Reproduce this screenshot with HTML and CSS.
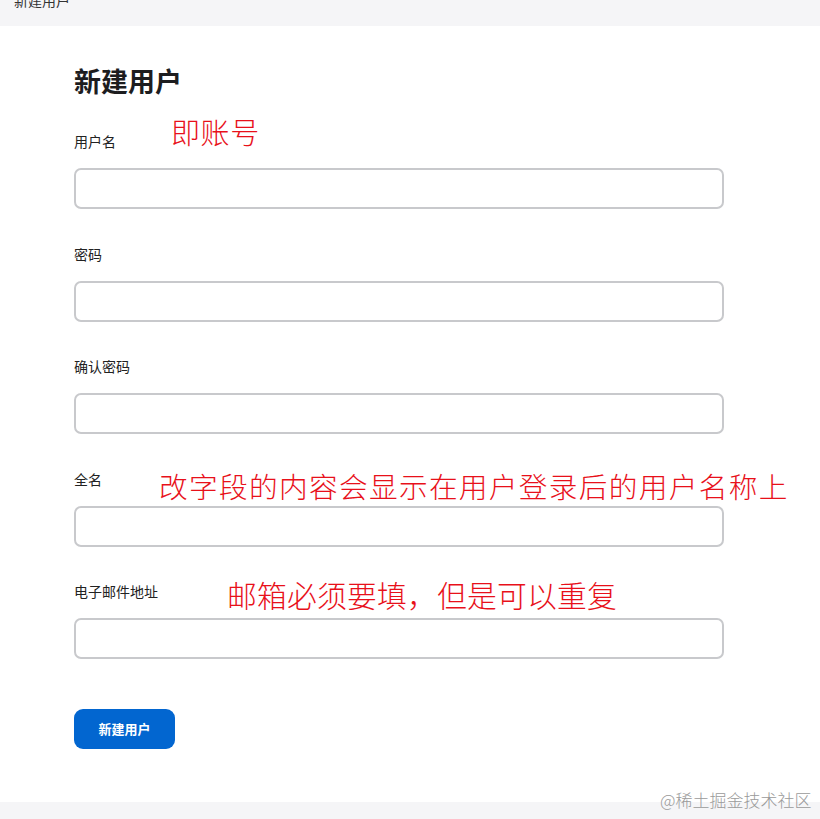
FILE: index.html
```html
<!DOCTYPE html>
<html lang="zh-CN">
<head>
<meta charset="utf-8">
<title>新建用户</title>
<link rel="stylesheet" href="styles.css">
</head>
<body>
<header class="topbar"><span class="topbar-title">新建用户</span></header>
<main class="panel">
  <h1 class="title">新建用户</h1>
  <form class="form">
    <div class="field">
      <label class="label">用户名</label>
      <input class="input" type="text">
    </div>
    <div class="field">
      <label class="label">密码</label>
      <input class="input" type="password">
    </div>
    <div class="field">
      <label class="label">确认密码</label>
      <input class="input" type="password">
    </div>
    <div class="field">
      <label class="label">全名</label>
      <input class="input" type="text">
    </div>
    <div class="field">
      <label class="label">电子邮件地址</label>
      <input class="input" type="email">
    </div>
    <button class="btn" type="button">新建用户</button>
  </form>
  <span class="note note-account">即账号</span>
  <span class="note note-fullname">改字段的内容会显示在用户登录后的用户名称上</span>
  <span class="note note-email">邮箱必须要填，但是可以重复</span>
</main>
<footer class="bottombar"></footer>
<span class="watermark">@稀土掘金技术社区</span>
</body>
</html>
```
FILE: styles.css
```css
html, body {
  margin: 0;
  padding: 0;
}
body {
  background: #f5f5f7;
  font-family: "Noto Sans CJK SC", "Noto Sans", sans-serif;
  color: #1d1d1f;
  height: 819px;
  overflow: hidden;
}
.topbar {
  height: 26px;
  background: #f5f5f7;
  overflow: hidden;
  padding-left: 14px;
}
.topbar-title {
  display: block;
  font-size: 14px;
  line-height: 20px;
  margin-top: -10px;
  color: #333;
}
.panel {
  position: relative;
  background: #fff;
  height: 776px;
  box-sizing: border-box;
  padding: 37px 0 0 74px;
}
.title {
  margin: 0;
  font-size: 27px;
  line-height: 36px;
  font-weight: 700;
  color: #1d1d1f;
}
.form {
  margin-top: 32px;
  width: 650px;
  display: flex;
  flex-direction: column;
  gap: 34.5px;
}
.field {
  display: flex;
  flex-direction: column;
  gap: 17px;
}
.label {
  font-size: 14px;
  line-height: 20px;
  color: #222;
}
.input {
  box-sizing: border-box;
  height: 41px;
  width: 650px;
  border: 2px solid #c8c9cc;
  border-radius: 7px;
  background: #fff;
  margin: 0;
  padding: 0 10px;
  outline: none;
}
.btn {
  margin-top: 15px;
  align-self: flex-start;
  width: 101px;
  height: 40px;
  border: 0;
  border-radius: 9px;
  background: #0266d0;
  color: #fff;
  font-family: "Noto Sans CJK SC", sans-serif;
  font-size: 13px;
  font-weight: 700;
  cursor: pointer;
}
.note {
  position: absolute;
  color: #e8101a;
  font-family: "Noto Sans CJK SC", sans-serif;
  font-weight: 300;
  white-space: nowrap;
  line-height: 1;
}
.note-account {
  left: 171px;
  top: 91px;
  font-size: 29px;
  letter-spacing: 0.6px;
}
.note-fullname {
  left: 159px;
  top: 446px;
  font-size: 28.7px;
  letter-spacing: 1.3px;
}
.note-email {
  left: 227px;
  top: 554px;
  font-size: 29.8px;
  letter-spacing: 0.2px;
}
.bottombar {
  height: 17px;
  background: #f5f5f7;
}
.watermark {
  position: absolute;
  left: 660px;
  top: 789px;
  font-size: 17px;
  line-height: 22px;
  color: #9a9a9a;
  font-family: "Noto Sans CJK SC", sans-serif;
  font-weight: 300;
  white-space: nowrap;
}
```
